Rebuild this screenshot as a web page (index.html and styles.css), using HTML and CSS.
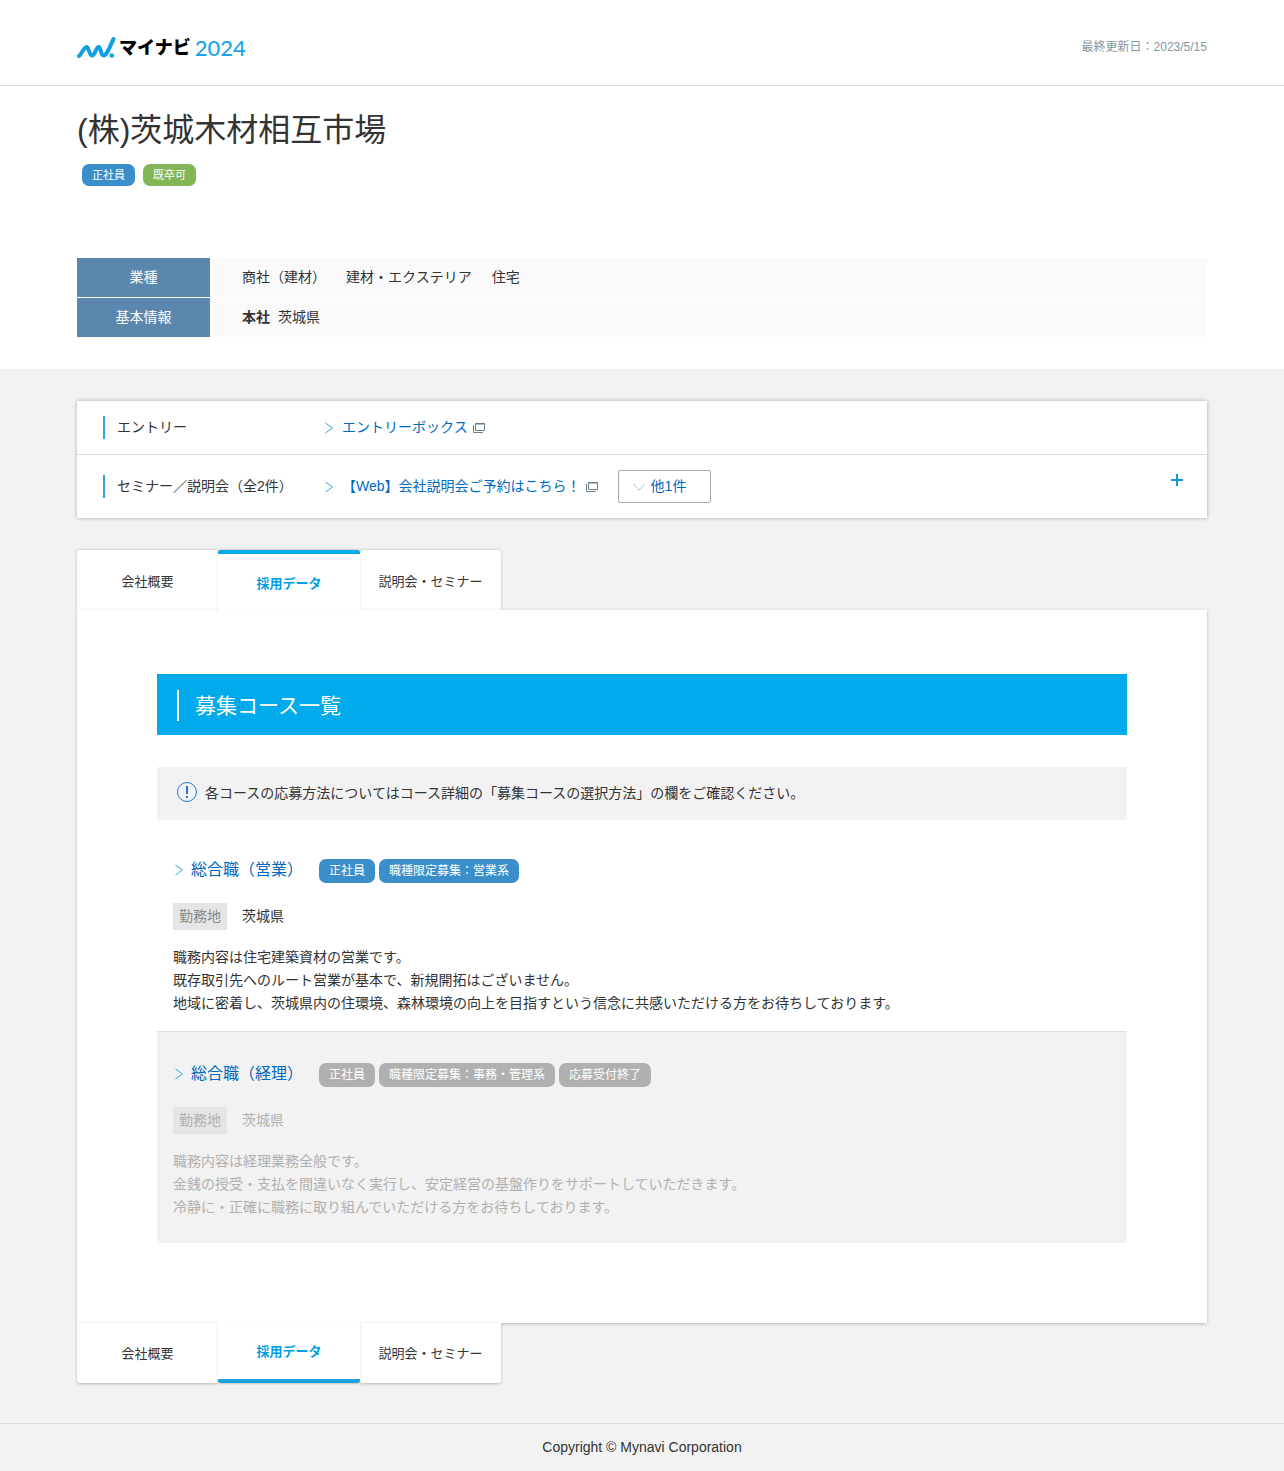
FILE: index.html
```html
<!DOCTYPE html>
<html lang="ja">
<head>
    <meta charset="UTF-8">
    <meta name="viewport" content="width=device-width, initial-scale=1.0">
    <title>(株)茨城木材相互市場 | マイナビ2024</title>
    <link rel="stylesheet" href="styles.css">
</head>
<body>

    <header class="site-header">
        <div class="container header-inner">
            <a class="logo" href="#">
                <svg class="logo-mark" viewBox="0 0 40 22" aria-hidden="true">
                    <path d="M2 19C4 18 7 10 9.500 10C12 10 12 18.500 15 18.500C18 18.500 19 10 21.700 10C24 10 23.500 18.500 26.500 18.500C30 18.500 33 9 36.500 2" />
                    <circle cx="34.800" cy="18.500" r="2.300" />
                </svg>
                <span class="logo-name">マイナビ</span>
                <span class="logo-year">2024</span>
            </a>
            <p class="updated">最終更新日：2023/5/15</p>
        </div>
    </header>

    <!-- Company -->
    <section class="company">
        <div class="container">
            <h1>(株)茨城木材相互市場</h1>
            <ul class="company-tags">
                <li class="blue">正社員</li>
                <li class="green">既卒可</li>
            </ul>
            <table class="company-table">
                <tr>
                    <th scope="row">業種</th>
                    <td><span class="industry">商社（建材）</span><span class="industry">建材・エクステリア</span><span class="industry">住宅</span></td>
                </tr>
                <tr>
                    <th scope="row">基本情報</th>
                    <td><strong>本社</strong>茨城県</td>
                </tr>
            </table>
        </div>
    </section>

    <main class="container">
        <!-- Entry / Seminar -->
        <section class="entry">
            <div class="entry-row">
                <h2>エントリー</h2>
                <a class="arrow-link" href="#">
                    <svg class="arrow" viewBox="0 0 8 12" aria-hidden="true"><path d="M0.500 1L7.500 6L0.500 11" /></svg>
                    エントリーボックス
                    <svg class="window" viewBox="0 0 12 10" aria-hidden="true"><path d="M2.500 0.500H11.500V7.500H2.500ZM2.500 1H11.500M0.500 2V9.500H10" /></svg>
                </a>
            </div>
            <div class="entry-row">
                <h2>セミナー／説明会（全2件）</h2>
                <a class="arrow-link" href="#">
                    <svg class="arrow" viewBox="0 0 8 12" aria-hidden="true"><path d="M0.500 1L7.500 6L0.500 11" /></svg>
                    【Web】会社説明会ご予約はこちら！
                    <svg class="window" viewBox="0 0 12 10" aria-hidden="true"><path d="M2.500 0.500H11.500V7.500H2.500ZM2.500 1H11.500M0.500 2V9.500H10" /></svg>
                </a>
                <button class="more" type="button">
                    <svg class="chevron" viewBox="0 0 12 8" aria-hidden="true"><path d="M0.500 1L6 7L11.500 1" /></svg>
                    他1件
                </button>
                <button class="plus" type="button" aria-label="開く">
                    <svg viewBox="0 0 12 12" aria-hidden="true"><path d="M6 0V12M0 6H12" /></svg>
                </button>
            </div>
        </section>

        <nav class="tabs">
            <a href="#">会社概要</a>
            <a class="active" href="#">採用データ</a>
            <a href="#">説明会・セミナー</a>
        </nav>

        <section class="panel">
            <h2 class="panel-title"><span>募集コース一覧</span></h2>
            <p class="notice">
                <svg viewBox="0 0 20 20" aria-hidden="true">
                    <circle cx="10" cy="10" r="9.500" />
                    <path d="M10 4V12M10 14V16" />
                </svg>
                各コースの応募方法についてはコース詳細の「募集コースの選択方法」の欄をご確認ください。
            </p>

            <!-- Courses -->
            <article class="course">
                <div class="course-head">
                    <h3><a class="arrow-link" href="#">
                        <svg class="arrow" viewBox="0 0 8 12" aria-hidden="true"><path d="M0.500 1L7.500 6L0.500 11" /></svg>
                        総合職（営業）
                    </a></h3>
                    <ul class="tags">
                        <li>正社員</li>
                        <li>職種限定募集：営業系</li>
                    </ul>
                </div>
                <dl class="place">
                    <dt>勤務地</dt>
                    <dd>茨城県</dd>
                </dl>
                <p>職務内容は住宅建築資材の営業です。<br>既存取引先へのルート営業が基本で、新規開拓はございません。<br>地域に密着し、茨城県内の住環境、森林環境の向上を目指すという信念に共感いただける方をお待ちしております。</p>
            </article>

            <article class="course closed">
                <div class="course-head">
                    <h3><a class="arrow-link" href="#">
                        <svg class="arrow" viewBox="0 0 8 12" aria-hidden="true"><path d="M0.500 1L7.500 6L0.500 11" /></svg>
                        総合職（経理）
                    </a></h3>
                    <ul class="tags">
                        <li>正社員</li>
                        <li>職種限定募集：事務・管理系</li>
                        <li>応募受付終了</li>
                    </ul>
                </div>
                <dl class="place">
                    <dt>勤務地</dt>
                    <dd>茨城県</dd>
                </dl>
                <p>職務内容は経理業務全般です。<br>金銭の授受・支払を間違いなく実行し、安定経営の基盤作りをサポートしていただきます。<br>冷静に・正確に職務に取り組んでいただける方をお待ちしております。</p>
            </article>
        </section>

        <nav class="tabs tabs-bottom">
            <a href="#">会社概要</a>
            <a class="active" href="#">採用データ</a>
            <a href="#">説明会・セミナー</a>
        </nav>
    </main>

    <footer>Copyright © Mynavi Corporation</footer>

</body>
</html>
```
FILE: styles.css
```css
* {
    box-sizing: border-box;
}
body {
    margin: 0;
    background-color: #f2f2f2;
    color: #333;
    font-family: "Liberation Sans", "Noto Sans CJK JP", sans-serif;
    font-size: 14px;
    line-height: 23px;
}
h1, h2, h3, p, ul, dl, dd {
    margin: 0;
    padding: 0;
    font-weight: normal;
}
ul {
    list-style: none;
}
a {
    color: #0068c0;
    text-decoration: none;
}
button {
    font: inherit;
    cursor: pointer;
}
svg {
    display: block;
    flex: none;
    fill: none;
}
.container {
    width: 88%;
    max-width: 1130px;
    margin: 0 auto;
}

/* header */
.site-header {
    background-color: white;
    border-bottom: 1px solid #ddd;
}
.header-inner {
    display: flex;
    justify-content: space-between;
    align-items: center;
    min-height: 85px;
    padding-top: 10px;
}
.logo {
    display: flex;
    align-items: center;
}
.logo-mark {
    width: 40px;
    height: 22px;
    margin-right: 2px;
    stroke: #0f9fe5;
    stroke-width: 4;
    stroke-linecap: round;
}
.logo-mark circle {
    fill: #0f9fe5;
    stroke: none;
}
.logo-name {
    color: black;
    font-size: 18px;
    font-weight: 900;
    line-height: 24px;
}
.logo-year {
    padding-left: 4px;
    color: #1ba4e8;
    font-family: Lato, sans-serif;
    font-size: 22px;
    font-weight: 500;
    line-height: 28px;
}
.updated {
    color: #8595a3;
    font-size: 12px;
}

/* company */
.company {
    background-color: white;
    padding: 20px 0 32px;
}
.company h1 {
    font-size: 32px;
    line-height: 48px;
}
.company-tags {
    display: flex;
    gap: 8px;
    padding: 10px 5px 0;
    margin-bottom: 72px;
}
.company-tags li {
    padding: 0 10px;
    border-radius: 7px;
    color: white;
    font-size: 11px;
    line-height: 22px;
}
.blue {
    background-color: #3a8fcb;
}
.green {
    background-color: #82b656;
}
.company-table {
    width: 100%;
    border-spacing: 0;
}
.company-table th,
.company-table td {
    padding: 8px 0;
}
.company-table th {
    width: 133px;
    background-color: #5b87af;
    color: white;
    font-weight: normal;
}
.company-table td {
    padding-left: 32px;
    background-color: #fafafa;
}
.company-table tr + tr th,
.company-table tr + tr td {
    border-top: 1px solid white;
}
.industry {
    margin-right: 20px;
}
.company-table strong {
    margin-right: 8px;
}

/* entry */
.entry {
    margin: 32px 0;
    background-color: white;
    box-shadow: 0 0 4px rgba(0, 0, 0, 0.3);
}
.entry-row {
    display: flex;
    align-items: center;
    padding: 15px 24px 15px 26px;
}
.entry-row + .entry-row {
    border-top: 1px solid #ddd;
}
.entry-row h2 {
    width: 222px;
    padding-left: 12px;
    border-left: 2px solid #2ea7d8;
    font-size: 14px;
}
.arrow-link {
    display: flex;
    align-items: center;
}
.arrow {
    width: 8px;
    height: 12px;
    margin-right: 9px;
    stroke: #2ea7e0;
}
.window {
    width: 12px;
    height: 10px;
    margin-left: 5px;
    stroke: #6b7f8c;
}
.more {
    display: flex;
    align-items: center;
    margin-left: 20px;
    padding: 4px 24px 4px 14px;
    border: 1px solid #aaa;
    border-radius: 2px;
    background-color: white;
    color: #0068c0;
}
.chevron {
    width: 12px;
    height: 8px;
    margin-right: 6px;
    stroke: #8ccbe8;
}
.plus {
    align-self: flex-start;
    margin-left: auto;
    padding: 4px 0;
    border: none;
    background: none;
}
.plus svg {
    width: 12px;
    height: 12px;
    stroke: #0f9bd2;
    stroke-width: 2;
}

/* tabs */
.tabs {
    display: flex;
}
.tabs a {
    width: 141px;
    padding: 20px 0 17px;
    border-radius: 3px 3px 0 0;
    background-color: white;
    box-shadow: 0 0 3px rgba(0, 0, 0, 0.25);
    color: #333;
    font-size: 13px;
    text-align: center;
}
.tabs .active {
    z-index: 3;
    width: 142px;
    margin-bottom: -2px;
    padding-top: 18px;
    border-top: 4px solid #00aaeb;
    box-shadow: 0 -1px 2px rgba(0, 0, 0, 0.15);
    color: #00a0e9;
    font-weight: bold;
}
.tabs-bottom a {
    z-index: 2;
    padding: 19px 0 18px;
    border-radius: 0 0 3px 3px;
    box-shadow: 0 1px 3px rgba(0, 0, 0, 0.25);
}
.tabs-bottom .active {
    margin: -2px 0 0;
    padding: 19px 0 16px;
    border-top: none;
    border-bottom: 4px solid #1ba1dc;
    box-shadow: 0 1px 2px rgba(0, 0, 0, 0.2);
}

/* panel */
.panel {
    position: relative;
    z-index: 1;
    padding: 64px 80px 80px;
    background-color: white;
    box-shadow: 0 1px 3px rgba(0, 0, 0, 0.25);
}
.panel-title {
    padding: 16px 20px 14px;
    background-color: #00aaeb;
    color: white;
    font-size: 21px;
    line-height: 31px;
}
.panel-title span {
    display: block;
    padding-left: 16px;
    border-left: 2px solid white;
}
.notice {
    display: flex;
    align-items: flex-start;
    gap: 8px;
    margin-top: 32px;
    padding: 15px 20px;
    background-color: #f2f2f2;
}
.notice svg {
    width: 20px;
    height: 20px;
    stroke: #2277cc;
}
.notice path {
    stroke-width: 2;
}

/* course */
.course {
    padding: 39px 16px 16px;
}
.course-head {
    display: flex;
    align-items: flex-start;
}
.course h3 {
    font-size: 16px;
    line-height: 22px;
}
.course .arrow {
    margin-left: 2px;
    margin-right: 8px;
}
.tags {
    display: flex;
    gap: 4px;
    margin-left: 16px;
}
.tags li {
    padding: 0 10px;
    border-radius: 7px;
    background-color: #3a8fcb;
    color: white;
    font-size: 12px;
    line-height: 24px;
}
.place {
    display: flex;
    align-items: center;
    gap: 15px;
    margin: 20px 0 16px;
}
.place dt {
    padding: 2px 6px;
    background-color: #e5e5e5;
    color: #888;
}
.closed {
    padding: 31px 16px 24px;
    border-top: 1px solid #ddd;
    background-color: #f2f2f2;
    color: #b0b0b0;
}
.closed .tags li {
    background-color: #b0b0b0;
}
.closed .place dt {
    color: #b0b0b0;
}

footer {
    margin-top: 40px;
    padding: 12px 0;
    border-top: 1px solid #ddd;
    text-align: center;
}
```
